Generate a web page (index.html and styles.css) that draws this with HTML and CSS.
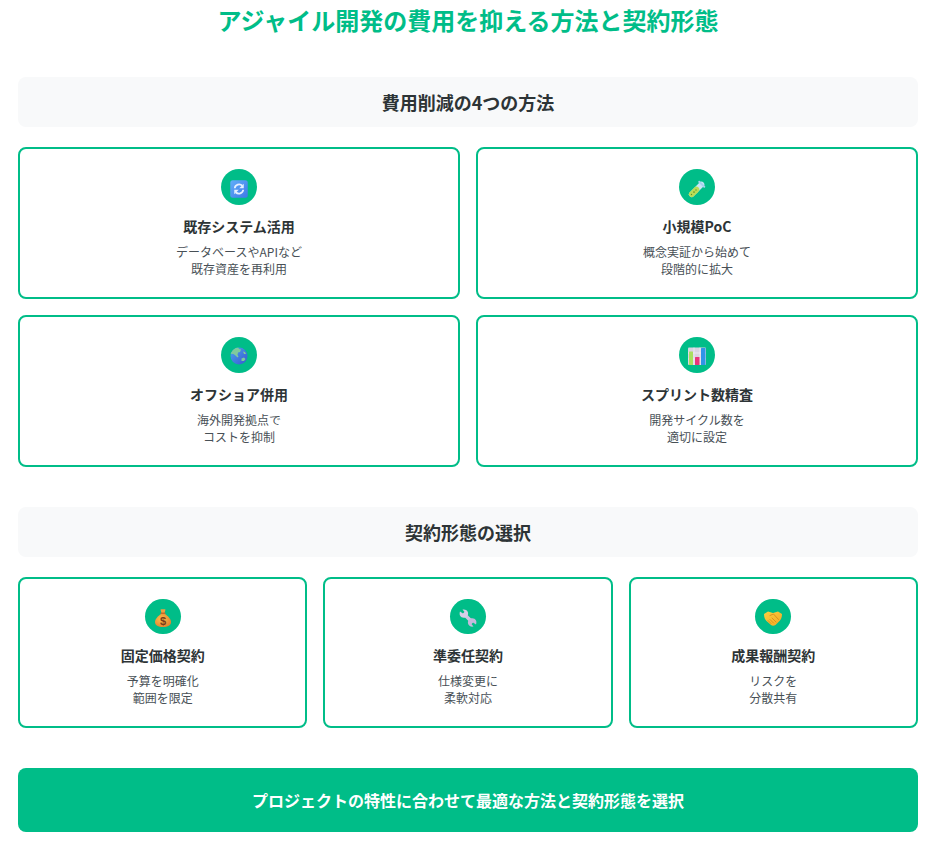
FILE: index.html
```html
<!DOCTYPE html>
<html lang="ja">
<head>
<meta charset="utf-8">
<title>アジャイル開発の費用を抑える方法と契約形態</title>
<link rel="stylesheet" href="styles.css">
</head>
<body>
<main class="page">
  <h1 class="title">アジャイル開発の費用を抑える方法と契約形態</h1>

  <section class="section">
    <h2 class="section-head">費用削減の4つの方法</h2>
    <div class="grid grid-2">
      <article class="card">
        <div class="icon">
          <svg class="glyph" viewBox="0 0 36 36" aria-hidden="true">
            <defs><linearGradient id="bl" x1="0" y1="0" x2="1" y2="1"><stop offset="0" stop-color="#62aef8"/><stop offset="1" stop-color="#3f78e8"/></linearGradient></defs>
            <rect x="0.500" y="0.500" width="35" height="35" rx="5" fill="url(#bl)"/>
            <path d="M9.500 16.500a8.800 8.800 0 0 1 15-5" fill="none" stroke="#e4f0ff" stroke-width="3.600"/>
            <path d="M27.500 7.500v9h-9z" fill="#e4f0ff"/>
            <path d="M26.500 19.500a8.800 8.800 0 0 1-15 5" fill="none" stroke="#e4f0ff" stroke-width="3.600"/>
            <path d="M8.500 28.500v-9h9z" fill="#e4f0ff"/>
          </svg>
        </div>
        <h3 class="card-title">既存システム活用</h3>
        <p class="card-text">データベースやAPIなど<br>既存資産を再利用</p>
      </article>
      <article class="card">
        <div class="icon">
          <svg class="glyph" viewBox="0 0 36 36" aria-hidden="true">
            <path d="M7.500 28.500L27 9" stroke="#c6e6f4" stroke-width="11" stroke-linecap="round"/>
            <path d="M7.500 28.500L17 19" stroke="#b9dd55" stroke-width="11" stroke-linecap="round"/>
            <path d="M12 19.500l6.500 6.500" stroke="#b9dd55" stroke-width="3"/>
            <circle cx="12" cy="24" r="1.700" fill="#5f8f30"/><circle cx="7" cy="29" r="1.400" fill="#5f8f30"/><circle cx="16" cy="20" r="1.400" fill="#5f8f30"/>
            <path d="M22.500 3.500l10 10" stroke="#a5d2ee" stroke-width="4" stroke-linecap="round"/>
          </svg>
        </div>
        <h3 class="card-title">小規模PoC</h3>
        <p class="card-text">概念実証から始めて<br>段階的に拡大</p>
      </article>
      <article class="card">
        <div class="icon">
          <svg class="glyph" viewBox="0 0 36 36" aria-hidden="true">
            <defs>
              <linearGradient id="gb" x1="0" y1="0" x2="1" y2="1"><stop offset="0" stop-color="#4aa8ee"/><stop offset="1" stop-color="#3a55d0"/></linearGradient>
              <clipPath id="gc"><circle cx="18" cy="18" r="17"/></clipPath>
            </defs>
            <circle cx="18" cy="18" r="17" fill="url(#gb)"/>
            <g clip-path="url(#gc)" fill="#7fcb9c">
              <path d="M0 0h16l2 4 4 1-2 5-4 1-1 5 2 3-2 2-4-4-4-3-11-1z"/>
              <path d="M23 23l5-2 3 3-3 4-5 0z"/>
              <path d="M26 9l4 1 2 4-4 0z"/>
            </g>
          </svg>
        </div>
        <h3 class="card-title">オフショア併用</h3>
        <p class="card-text">海外開発拠点で<br>コストを抑制</p>
      </article>
      <article class="card">
        <div class="icon">
          <svg class="glyph" viewBox="0 0 36 36" aria-hidden="true">
            <rect x="0" y="1" width="36" height="35" rx="2" fill="#d8d4e2"/>
            <path d="M0 12h36M0 24h36M12 1v35M24 1v35" stroke="#f1eff5" stroke-width="1.500"/>
            <rect x="2" y="9" width="8" height="27" rx="1" fill="#a8e05f"/>
            <rect x="14" y="20" width="9" height="16" rx="1" fill="#e8357a"/>
            <rect x="26" y="2" width="9" height="34" rx="1" fill="#2f94e8"/>
          </svg>
        </div>
        <h3 class="card-title">スプリント数精査</h3>
        <p class="card-text">開発サイクル数を<br>適切に設定</p>
      </article>
    </div>
  </section>

  <section class="section">
    <h2 class="section-head">契約形態の選択</h2>
    <div class="grid grid-3">
      <article class="card">
        <div class="icon">
          <svg class="glyph" viewBox="0 0 36 36" aria-hidden="true">
            <defs><radialGradient id="mb" cx="0.4" cy="0.4" r="0.8"><stop offset="0" stop-color="#fcc04a"/><stop offset="1" stop-color="#e0762a"/></radialGradient></defs>
            <path d="M13 1c2-1 8-1 10 0l-2 7h-6z" fill="#f0a040"/>
            <rect x="13" y="7" width="10" height="3" rx="1.500" fill="#c8682a"/>
            <path d="M14 10h8c6 4 12 10 12 16 0 7-6 10-16 10S2 33 2 26c0-6 6-12 12-16z" fill="url(#mb)"/>
            <text class="dollar" x="18" y="32" text-anchor="middle">$</text>
          </svg>
        </div>
        <h3 class="card-title">固定価格契約</h3>
        <p class="card-text">予算を明確化<br>範囲を限定</p>
      </article>
      <article class="card">
        <div class="icon">
          <svg class="glyph" viewBox="0 0 36 36" aria-hidden="true">
            <path d="M9 9L27 27" stroke="#cfc6e2" stroke-width="7"/>
            <path d="M2 5l6 4 3-3-4-5c5-1 10 1 11 6 1 4-1 8-5 10-5 1-9 0-11-4-1-2-1-5 0-8z" fill="#d6cee8"/>
            <path d="M34 31l-6-4-3 3 4 5c-5 1-10-1-11-6-1-4 1-8 5-10 5-1 9 0 11 4 1 2 1 5 0 8z" fill="#c4b9dc"/>
          </svg>
        </div>
        <h3 class="card-title">準委任契約</h3>
        <p class="card-text">仕様変更に<br>柔軟対応</p>
      </article>
      <article class="card">
        <div class="icon">
          <svg class="glyph glyph-wide" viewBox="0 0 36 30" aria-hidden="true">
            <defs><linearGradient id="hs" x1="0" y1="0" x2="1" y2="1"><stop offset="0" stop-color="#fdd040"/><stop offset="1" stop-color="#f3a822"/></linearGradient></defs>
            <path d="M0 6l8-5 10 3 10-3 8 5c0 7-2 11-5 14l-8 8c-3 2-7 2-9 0l-9-8C2 17 0 13 0 6z" fill="url(#hs)"/>
            <path d="M12 9l7-3 10 11M16 14l8 8M12 17l7 7M8 19l6 6" stroke="#d98a1c" stroke-width="1.800" fill="none" stroke-linecap="round"/>
          </svg>
        </div>
        <h3 class="card-title">成果報酬契約</h3>
        <p class="card-text">リスクを<br>分散共有</p>
      </article>
    </div>
  </section>

  <div class="cta">プロジェクトの特性に合わせて最適な方法と契約形態を選択</div>
</main>
</body>
</html>
```

FILE: styles.css
```css
* { box-sizing: border-box; }
html, body { margin: 0; padding: 0; background: #fff; }
body {
  font-family: "Noto Sans CJK JP", "Noto Sans", sans-serif;
  color: #2d3436;
}
.page {
  width: 900px;
  margin-left: 18px;
  display: flex;
  flex-direction: column;
}
.title {
  margin: 3px 0 40px;
  font-size: 24px;
  line-height: 34.4px;
  font-weight: 700;
  text-align: center;
  color: #00bd88;
}
.section { margin-bottom: 40px; }
.section-head {
  margin: 0 0 20px;
  padding: 12px;
  height: 50px;
  font-size: 18px;
  line-height: 26px;
  font-weight: 700;
  text-align: center;
  background: #f8f9fa;
  border-radius: 8px;
}
.grid { display: grid; gap: 16px; }
.grid-2 { grid-template-columns: repeat(2, 1fr); }
.grid-3 { grid-template-columns: repeat(3, 1fr); }
.card {
  height: 151.6px;
  padding: 20px;
  border: 2px solid #00bd88;
  border-radius: 8px;
  background: #fff;
  display: flex;
  flex-direction: column;
  align-items: center;
  text-align: center;
}
.icon {
  width: 36px;
  height: 36px;
  border-radius: 50%;
  background: #00bd88;
  display: flex;
  align-items: center;
  justify-content: center;
}
.glyph {
  display: block;
  width: 18px;
  height: 18px;
  margin-top: 3px;
}
.glyph-wide { height: 15px; margin-top: 4px; }
.dollar {
  font-family: "Liberation Sans", sans-serif;
  font-size: 22px;
  font-weight: 700;
  fill: #7a3b1a;
}
.card-title {
  margin: 12px 0 6.2px;
  font-size: 14px;
  line-height: 19.6px;
  font-weight: 700;
}
.card-text {
  margin: 0;
  font-size: 12px;
  line-height: 17px;
  color: #485056;
}
.cta {
  height: 64px;
  display: flex;
  align-items: center;
  justify-content: center;
  background: #00bd88;
  color: #fff;
  border-radius: 8px;
  font-size: 16px;
  font-weight: 700;
}
```
